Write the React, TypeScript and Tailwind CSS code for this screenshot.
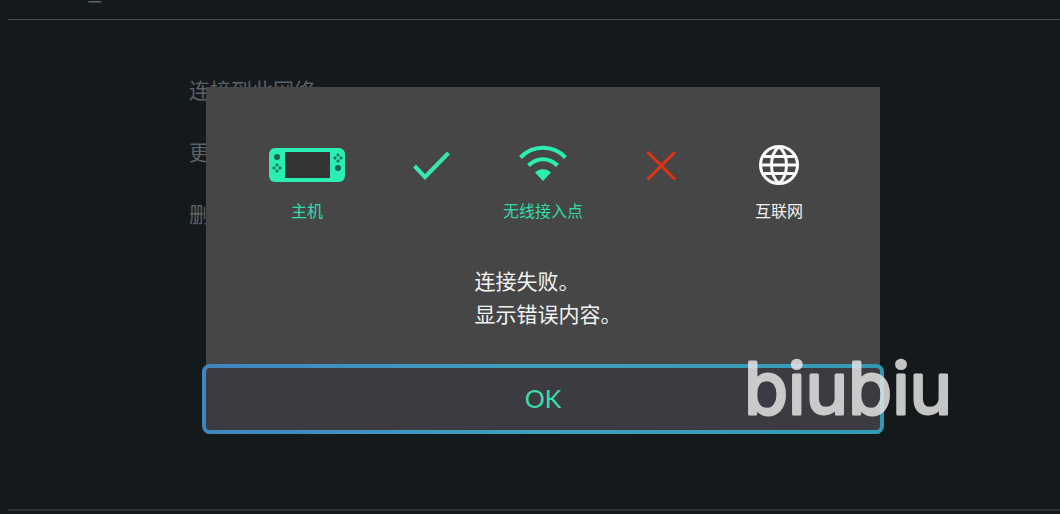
import React from 'react';

const menuItems = ['连接到此网络', '更改设置', '删除设置'];

function ConsoleIcon() {
  return (
    <svg viewBox="0 0 77 34" className="w-[77px] h-[34px]" aria-hidden="true">
      <rect width="76" height="34" rx="6" fill="#2ceeb3" />
      <rect x="16" y="4" width="45" height="26" fill="#353434" />
      <circle cx="8" cy="9" r="3" fill="#17634f" />
      <circle cx="69" cy="20" r="3" fill="#17634f" />
      <g fill="#1a7a60">
        <path d="M8 15l2 2-2 2-2-2zM8 21l2 2-2 2-2-2zM5 18l2 2-2 2-2-2zM11 18l2 2-2 2-2-2z" />
        <path d="M69 5l2 2-2 2-2-2zM69 11l2 2-2 2-2-2zM66 8l2 2-2 2-2-2zM72 8l2 2-2 2-2-2z" />
      </g>
    </svg>
  );
}

function CheckIcon() {
  return (
    <svg viewBox="0 0 52 40" className="w-[52px] h-10" fill="none" aria-hidden="true">
      <path d="M15.500 21l10.500 11 23.500-24" stroke="#3ae6b0" strokeWidth="4" />
    </svg>
  );
}

function WifiIcon() {
  return (
    <svg viewBox="0 0 48 40" className="w-12 h-10" fill="none" aria-hidden="true">
      <path d="M1.500 12.500C14 -0.500 34 -0.500 46.500 12.500" stroke="#2ceeb3" strokeWidth="4" />
      <path d="M9.500 20.500C18 12 30 12 38.500 20.500" stroke="#2ceeb3" strokeWidth="4" />
      <path d="M16 27.500C20 23 28 23 32 27.500L24 36z" fill="#2ceeb3" />
    </svg>
  );
}

function CrossIcon() {
  return (
    <svg viewBox="0 0 40 40" className="w-10 h-10" fill="none" aria-hidden="true">
      <path d="M6.500 7L34 34.500M34 7L6.500 34.500" stroke="#e23412" strokeWidth="3" />
    </svg>
  );
}

function GlobeIcon() {
  return (
    <svg viewBox="0 0 40 40" className="w-10 h-10" fill="none" stroke="#fafafa" strokeWidth="3" aria-hidden="true">
      <circle cx="20" cy="20" r="18.500" />
      <path d="M2 20h36M5 11.500h30M5 28.500h30" />
      <path d="M20 1.500C10 10 10 30 20 38.500C30 30 30 10 20 1.500z" />
    </svg>
  );
}

interface StatusProps {
  icon: React.ReactNode;
  label?: string;
  className?: string;
}

function Status({ icon, label, className = '' }: StatusProps) {
  return (
    <div className="flex flex-col items-center gap-[15px]">
      <div className="h-10 flex items-center justify-center">{icon}</div>
      {label && <span className={`text-base leading-5 whitespace-nowrap ${className}`}>{label}</span>}
    </div>
  );
}

function ConnectionDialog() {
  return (
    <div
      role="dialog"
      aria-label="连接失败"
      className="w-full bg-[#464646] pt-[58px]"
    >
      {/* Connection status */}
      <div className="grid grid-cols-5 px-[42px]">
        <Status icon={<ConsoleIcon />} label="主机" className="text-[#2fdcaa]" />
        <Status icon={<CheckIcon />} />
        <Status icon={<WifiIcon />} label="无线接入点" className="text-[#2fdcaa]" />
        <Status icon={<CrossIcon />} />
        <Status icon={<GlobeIcon />} label="互联网" className="text-[#f2f2f2]" />
      </div>

      {/* Message */}
      <div className="flex justify-center mt-11 pl-[10px] text-[21px] leading-[33px] text-[#f2f2f2]">
        <p>
          连接失败。
          <br />
          显示错误内容。
        </p>
      </div>

      {/* Confirm */}
      <div className="mt-[34px] -mx-1 rounded-lg bg-linear-to-r from-[#3f86c0] via-[#3fa0bd] to-[#3299b5] p-1">
        <button
          type="button"
          className="block w-full h-[62px] rounded-sm bg-[#3c3b42] font-['Lato',sans-serif] text-[25px] text-[#3bdcab]"
        >
          OK
        </button>
      </div>
    </div>
  );
}

export default function App() {
  return (
    <div className="relative min-h-screen flex flex-col overflow-hidden bg-[#14191c] font-['Noto_Sans_CJK_SC',sans-serif]">
      {/* Title scrolled out of view */}
      <header className="h-5 ml-2 pl-20 border-b border-[#434a4b]">
        <p className="-mt-[21px] text-2xl leading-5 text-[#5b6265]">_</p>
      </header>

      {/* Network options */}
      <ul className="flex-1 pt-[53px] pl-[189px] text-[21px] leading-8 text-[#5b6265] space-y-[30px]">
        {menuItems.map((item) => (
          <li key={item}>{item}</li>
        ))}
      </ul>

      <div className="h-1 ml-2 mb-px border-t-2 border-[#2c3133]" />

      <div className="absolute inset-0 pt-[87px] pl-[206px] pr-[180px]">
        <ConnectionDialog />
      </div>

      {/* Watermark */}
      <svg
        viewBox="0 0 240 100"
        className="absolute right-20 top-[340px] w-[240px] h-[100px] opacity-85 pointer-events-none"
      >
        <text
          x="4"
          y="74"
          className="font-['Inter',sans-serif] text-[72px]"
          fill="#e4e4e4"
          stroke="#e4e4e4"
          strokeWidth="3"
          strokeLinejoin="round"
        >
          biubiu
        </text>
      </svg>
    </div>
  );
}
